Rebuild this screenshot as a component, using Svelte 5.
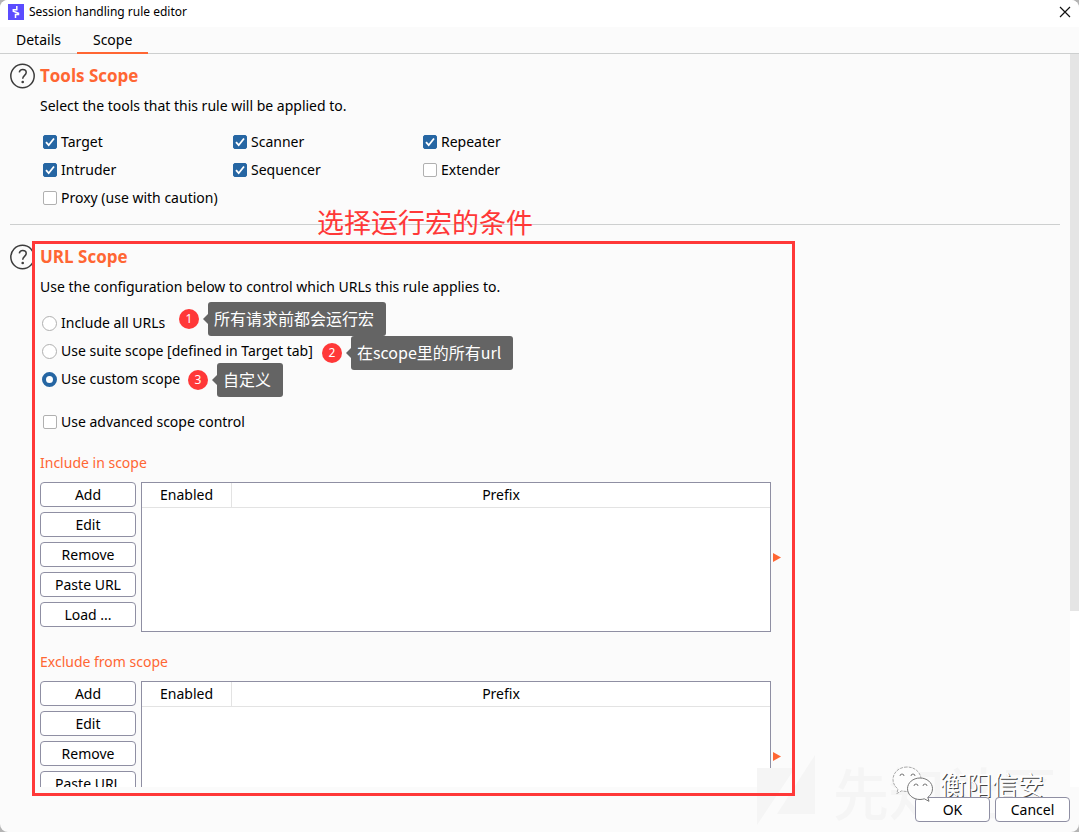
<script>
  let tab = $state('Scope');
  let scope = $state('custom');
  let advanced = $state(false);

  const tools = $state([
    { name: 'Target', on: true },
    { name: 'Scanner', on: true },
    { name: 'Repeater', on: true },
    { name: 'Intruder', on: true },
    { name: 'Sequencer', on: true },
    { name: 'Extender', on: false },
    { name: 'Proxy (use with caution)', on: false }
  ]);

  const scopes = [
    { id: 'all', label: 'Include all URLs' },
    { id: 'suite', label: 'Use suite scope [defined in Target tab]' },
    { id: 'custom', label: 'Use custom scope' }
  ];

  const lists = ['Include in scope', 'Exclude from scope'];
  const actions = ['Add', 'Edit', 'Remove', 'Paste URL', 'Load ...'];

  const notes = [
    { x: 179, y: 302, text: '所有请求前都会运行宏' },
    { x: 322, y: 336, text: '在scope里的所有url' },
    { x: 188, y: 363, text: '自定义' }
  ];
</script>

{#snippet help()}
  <button class="help" aria-label="Help">
    <svg viewBox="0 0 26 26" width="26" height="26" fill="none" stroke="#3c3c3c">
      <circle cx="12.5" cy="13" r="11.7" stroke-width="1.5" />
      <path d="M9.300 9.400C9.600 7.500 11 6.500 12.700 6.500c2.100 0 3.500 1.200 3.500 3 0 2.700-3.500 3.100-3.500 6.300" stroke-width="1.500" />
      <circle cx="12.700" cy="19" r="1.300" fill="#3c3c3c" stroke="none" />
    </svg>
  </button>
{/snippet}

<div class="window">
  <header class="titlebar">
    <svg class="logo" viewBox="0 0 16 16" width="16" height="16">
      <rect width="16" height="16" fill="#5b4cff" />
      <path d="M8.800 2v3.700H5.300v1.600l5.200 1.900v1.400H7.500V14" fill="none" stroke="#fff" stroke-width="1.500" />
    </svg>
    <span class="title">Session handling rule editor</span>
    <button class="close" aria-label="Close">
      <svg viewBox="0 0 12 12" width="12" height="12"><path d="M1 1l10 10M11 1L1 11" stroke="#111" stroke-width="1.200" /></svg>
    </button>
  </header>

  <nav class="tabs">
    {#each ['Details', 'Scope'] as name}
      <button class="tab" class:active={tab === name} onclick={() => (tab = name)}>{name}</button>
    {/each}
  </nav>

  <div class="body">
    <main class="content">
      <section class="section">
        {@render help()}
        <div class="main">
          <h2>Tools Scope</h2>
          <p>Select the tools that this rule will be applied to.</p>
          <div class="tools">
            {#each tools as tool}
              <label class="option"><input type="checkbox" bind:checked={tool.on} />{tool.name}</label>
            {/each}
          </div>
        </div>
      </section>

      <section class="section ruled">
        {@render help()}
        <div class="main">
          <h2>URL Scope</h2>
          <p>Use the configuration below to control which URLs this rule applies to.</p>
          <div class="radios">
            {#each scopes as s}
              <label class="option"><input type="radio" name="scope" value={s.id} bind:group={scope} />{s.label}</label>
            {/each}
          </div>
          <label class="option advanced"><input type="checkbox" bind:checked={advanced} />Use advanced scope control</label>

          {#each lists as list}
            <div class="list">
              <h3>{list}</h3>
              <div class="editor">
                <div class="actions">
                  {#each actions as action}
                    <button class="btn">{action}</button>
                  {/each}
                </div>
                <div class="frame">
                  <table>
                    <thead><tr><th class="enabled">Enabled</th><th>Prefix</th></tr></thead>
                    <tbody></tbody>
                  </table>
                </div>
                <svg class="arrow" viewBox="0 0 8 9" width="8" height="9"><path d="M0 0l8 4.500L0 9z" fill="#ff6633" /></svg>
              </div>
            </div>
          {/each}
        </div>
      </section>
    </main>
    <div class="track"><div class="thumb"></div></div>
  </div>

  <footer class="footer">
    <button class="btn">OK</button>
    <button class="btn">Cancel</button>
  </footer>

  <div class="community">
    <svg viewBox="0 0 60 72" width="60" height="72" fill="#f5f5f5"><path d="M0 13h38L0 70zM58 0v59H20z" /></svg>
    <span>先知社区</span>
  </div>

  <div class="account">
    <svg viewBox="0 0 42 36" width="42" height="36" fill="#fdfdfd" stroke="#777" stroke-width="1">
      <path d="M15 1C7 1 1 6.500 1 13.500c0 4 2 7.200 5 9.500l-1.200 4.500 5-2.700c1.600.5 3.300.7 5.200.7 8 0 14-5 14-12S23 1 15 1z" stroke="#aaa" stroke-dasharray="3 1" />
      <path d="M28 12c-7 0-12.500 4.700-12.500 10.700S21 33.500 28 33.500c1.500 0 3-.3 4.300-.7l4.700 2.500-1.200-4c2.900-2 4.700-5 4.700-8.600C40.500 16.700 35 12 28 12z" />
      <path d="M8 10a2 2 0 0 1 4 0M19 10a2 2 0 0 1 4 0M22 20a2 2 0 0 1 4 0M31 20a2 2 0 0 1 4 0" fill="none" />
    </svg>
    <span>衡阳信安</span>
  </div>

  <div class="highlight"></div>
  <div class="caption">选择运行宏的条件</div>
  {#each notes as note, i}
    <div class="note" style:left="{note.x}px" style:top="{note.y}px">
      <span class="badge">{i + 1}</span>
      <span class="tip">{note.text}</span>
    </div>
  {/each}
</div>

<style>
  :global(body) {
    background: #b4b4b4;
  }
  .window {
    position: relative;
    display: flex;
    flex-direction: column;
    height: 100vh;
    box-sizing: border-box;
    overflow: hidden;
    border-radius: 8px;
    background: #fbfbfb;
    color: #000;
    font: 14px/20px 'Noto Sans', 'Noto Sans CJK SC', sans-serif;
  }
  button {
    font: inherit;
    color: inherit;
    padding: 0;
    border: 0;
    background: none;
  }
  .titlebar {
    display: flex;
    align-items: center;
    flex: none;
    height: 27px;
    box-sizing: border-box;
    padding: 0 8px 4px;
    background: #fff;
    font-size: 12px;
  }
  .title {
    flex: 1;
    margin-left: 5px;
  }
  .close {
    display: flex;
  }
  .tabs {
    display: flex;
    flex: none;
    height: 26px;
    border-bottom: 1px solid #cdcfcf;
  }
  .tab {
    height: 27px;
    padding: 0 16px;
    border-bottom: 2px solid transparent;
  }
  .tab.active {
    border-color: #ff6633;
  }
  .body {
    display: flex;
    flex: 1;
    min-height: 0;
  }
  .content {
    flex: 1;
    overflow: hidden;
    padding: 0 10px;
  }
  .track {
    width: 9px;
    background: #fff;
  }
  .thumb {
    height: 76%;
    background: #e5e5e5;
  }
  .section {
    display: flex;
    gap: 4px;
    padding: 9px 0 13px;
  }
  .ruled {
    padding-top: 19px;
    border-top: 1px solid #cdcfcf;
  }
  .help {
    align-self: flex-start;
    display: flex;
  }
  .main {
    flex: 1;
  }
  h2 {
    margin: 0;
    color: #ff6633;
    font-family: 'Open Sans', sans-serif;
    font-size: 17px;
    line-height: 25px;
  }
  p {
    margin: 8px 0 12px;
  }
  .tools {
    display: grid;
    grid-template-columns: repeat(3, 190px);
  }
  .option {
    display: flex;
    align-items: center;
    gap: 4px;
    height: 28px;
    padding-left: 3px;
    white-space: nowrap;
  }
  .radios .option {
    padding-left: 2px;
  }
  input {
    appearance: none;
    width: 14px;
    height: 14px;
    margin: 0;
    box-sizing: border-box;
    border: 1px solid #b0b0b0;
    border-radius: 2px;
    background: #fff;
  }
  input[type='radio'] {
    width: 15px;
    height: 15px;
    border-radius: 50%;
  }
  input[type='radio']:checked {
    border: 4px solid #2666a3;
  }
  input[type='checkbox']:checked {
    border-color: #2666a3;
    background: #2666a3 url("data:image/svg+xml,%3Csvg xmlns='http://www.w3.org/2000/svg' viewBox='0 0 12 12'%3E%3Cpath d='M2 6.200l2.700 3L10 2.500' fill='none' stroke='white' stroke-width='1.800'/%3E%3C/svg%3E") center / 12px 12px no-repeat;
  }
  .section {
    padding-bottom: 12px;
  }
  .advanced {
    margin: 15px 0 17px;
  }
  .list {
    margin-bottom: 20px;
  }
  h3 {
    margin: 0 0 9px;
    color: #ff6633;
    font-size: 14px;
    font-weight: 400;
  }
  .editor {
    display: flex;
  }
  .actions {
    display: flex;
    flex-direction: column;
    gap: 5px;
    width: 96px;
    margin-right: 5px;
  }
  .btn {
    height: 25px;
    box-sizing: border-box;
    border: 1px solid #8f8fa3;
    border-radius: 4px;
    background: #fff;
    line-height: 22px;
  }
  .frame {
    width: 630px;
    height: 150px;
    box-sizing: border-box;
    border: 1px solid #8f8fa3;
    background: #fff;
  }
  table {
    width: 100%;
    border-collapse: collapse;
    table-layout: fixed;
  }
  thead tr {
    border-bottom: 1px solid #e3e3e3;
  }
  th {
    height: 24px;
    padding: 0;
    font-weight: 400;
  }
  .enabled {
    width: 89px;
    border-right: 1px solid #e3e3e3;
  }
  .arrow {
    align-self: center;
    margin-left: 2px;
  }
  .footer {
    position: relative;
    z-index: 1;
    display: flex;
    flex: none;
    justify-content: flex-end;
    gap: 5px;
    padding: 10px 9px;
  }
  .footer .btn {
    width: 75px;
  }
  .community {
    position: absolute;
    right: 22px;
    bottom: 5px;
    display: flex;
    align-items: center;
    gap: 16px;
    color: #f5f5f5;
    font: 500 56px/72px 'Noto Sans CJK SC', sans-serif;
    pointer-events: none;
  }
  .account {
    position: absolute;
    right: 35px;
    bottom: 30px;
    display: flex;
    align-items: center;
    gap: 6px;
    color: #fff;
    font: 26px/36px 'Noto Sans CJK SC', sans-serif;
    text-shadow: 1px 1px 0 #444;
    pointer-events: none;
  }
  .account svg {
    position: relative;
    z-index: 2;
  }
  .highlight {
    position: absolute;
    z-index: 2;
    left: 32px;
    top: 241px;
    bottom: 36px;
    width: 763px;
    box-sizing: border-box;
    border: 3px solid #ff3838;
    pointer-events: none;
  }
  .caption {
    position: absolute;
    left: 317px;
    top: 204px;
    color: #ff3838;
    font: 27px/36px 'Noto Sans CJK SC', sans-serif;
    white-space: nowrap;
  }
  .note {
    position: absolute;
    display: flex;
    align-items: center;
    gap: 9px;
    color: #fff;
    white-space: nowrap;
  }
  .badge {
    width: 20px;
    border-radius: 50%;
    background: #ff3838;
    font-size: 12px;
    text-align: center;
  }
  .tip {
    position: relative;
    padding: 0 12px 2px 6px;
    border-radius: 3px;
    background: #646464;
    font: 16px/32px 'Noto Sans CJK SC', sans-serif;
  }
  .tip::before {
    content: '';
    position: absolute;
    left: -5px;
    top: 12px;
    border: 5px solid transparent;
    border-left: 0;
    border-right-color: #646464;
  }
</style>
